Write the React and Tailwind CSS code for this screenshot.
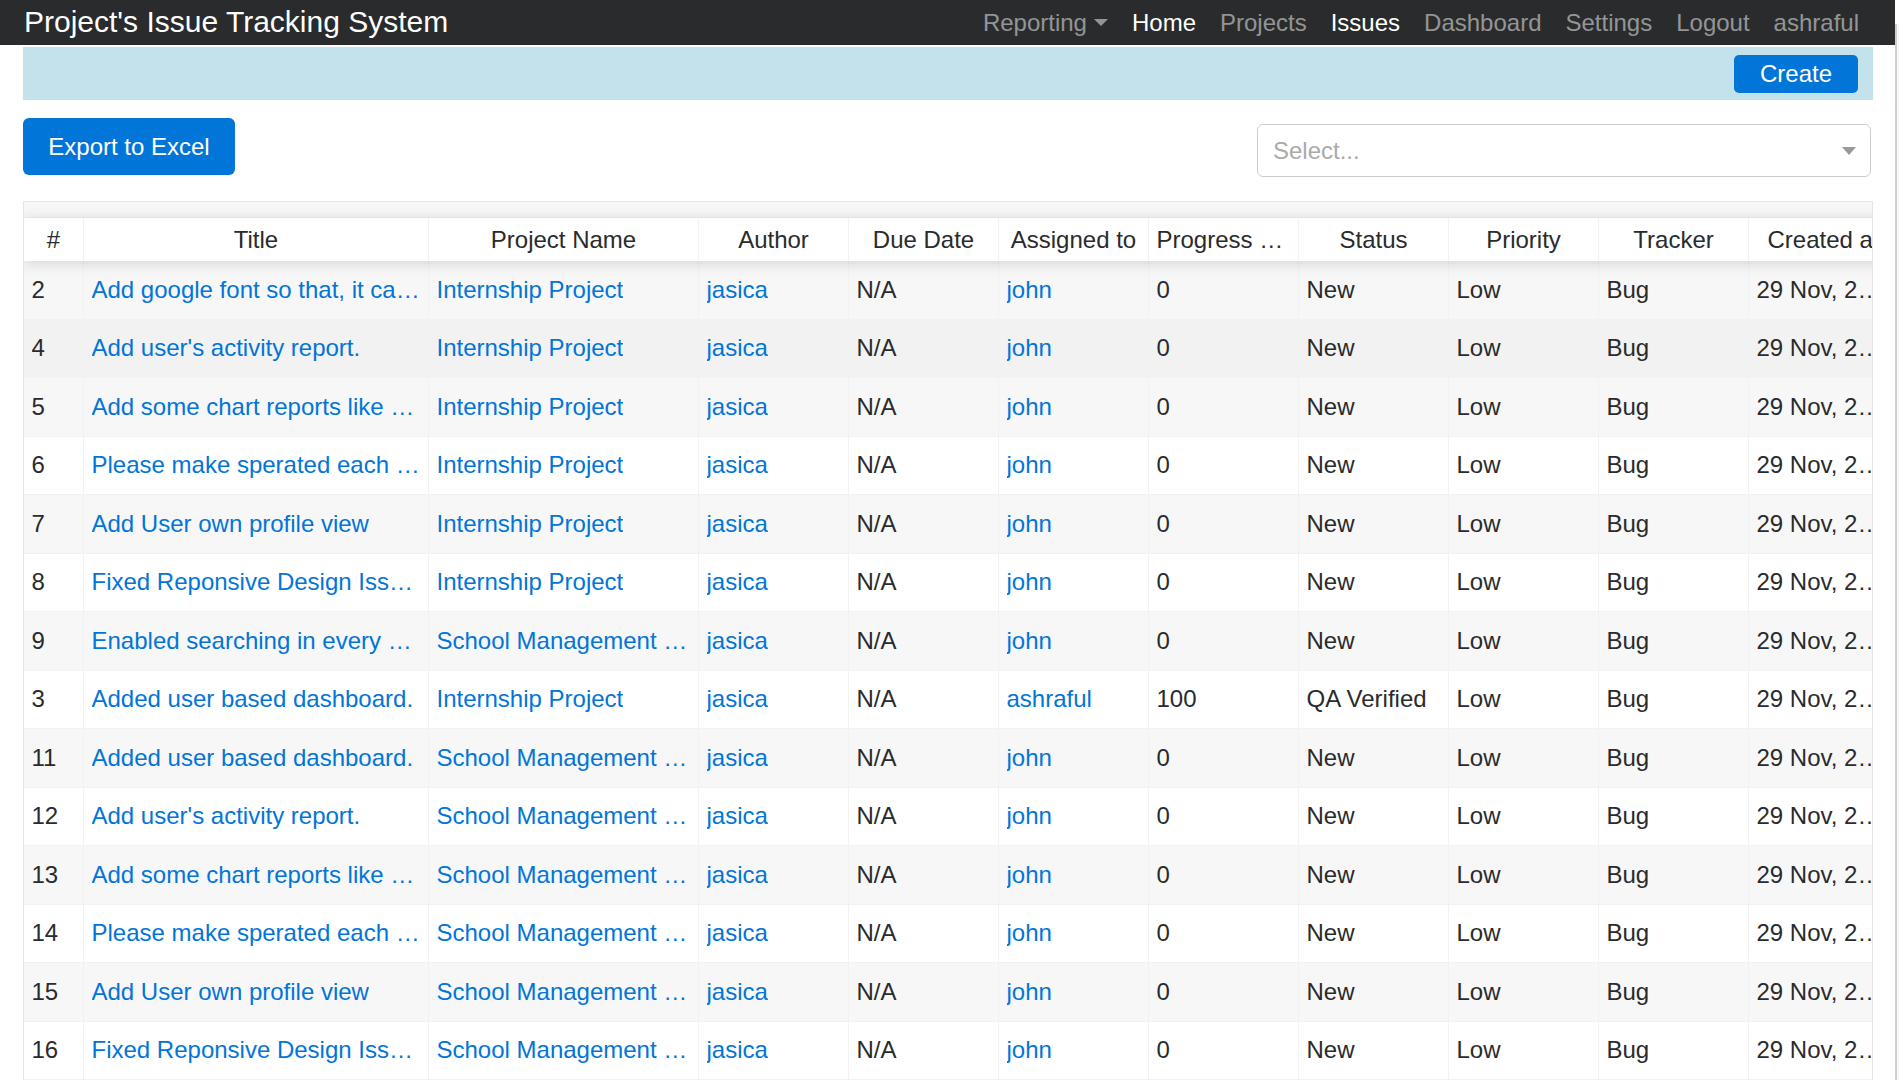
const font = "font-['Liberation_Sans',Arial,sans-serif]";

const columns = [
  { key: "id", label: "#", w: "w-[60px]" },
  { key: "title", label: "Title", w: "w-[345px]", link: true },
  { key: "project", label: "Project Name", w: "w-[270px]", link: true },
  { key: "author", label: "Author", w: "w-[150px]", link: true },
  { key: "due", label: "Due Date", w: "w-[150px]" },
  { key: "assigned", label: "Assigned to", w: "w-[150px]", link: true },
  { key: "progress", label: "Progress Percentage", w: "w-[150px]" },
  { key: "status", label: "Status", w: "w-[150px]" },
  { key: "priority", label: "Priority", w: "w-[150px]" },
  { key: "tracker", label: "Tracker", w: "w-[150px]" },
  { key: "created", label: "Created at", w: "w-[150px]" },
];

const INTERN = "Internship Project";
const SCHOOL = "School Management System";

const issues = [
  ["2", "Add google font so that, it can look nicer", INTERN],
  ["4", "Add user's activity report.", INTERN],
  ["5", "Add some chart reports like pie chart", INTERN],
  ["6", "Please make sperated each module", INTERN],
  ["7", "Add User own profile view", INTERN],
  ["8", "Fixed Reponsive Design Issues", INTERN],
  ["9", "Enabled searching in every module", SCHOOL],
  ["3", "Added user based dashboard.", INTERN, "ashraful", "100", "QA Verified"],
  ["11", "Added user based dashboard.", SCHOOL],
  ["12", "Add user's activity report.", SCHOOL],
  ["13", "Add some chart reports like pie chart", SCHOOL],
  ["14", "Please make sperated each module", SCHOOL],
  ["15", "Add User own profile view", SCHOOL],
  ["16", "Fixed Reponsive Design Issues", SCHOOL],
].map(([id, title, project, assigned = "john", progress = "0", status = "New"]) => ({
  id,
  title,
  project,
  author: "jasica",
  due: "N/A",
  assigned,
  progress,
  status,
  priority: "Low",
  tracker: "Bug",
  created: "29 Nov, 2017 10:30 AM",
}));

function Navbar() {
  const links = [
    { label: "Home", active: true },
    { label: "Projects" },
    { label: "Issues", active: true },
    { label: "Dashboard" },
    { label: "Settings" },
    { label: "Logout" },
    { label: "ashraful" },
  ];

  return (
    <nav className="h-[45px] bg-[#292b2c] flex items-center pl-[24px] pr-[24px]">
      <a href="#" className="text-white text-[30px] leading-none -mt-[2px]">
        Project's Issue Tracking System
      </a>
      <ul className="ml-auto flex items-center text-[24px] leading-none">
        <li className="px-[12px] text-white/50 flex items-center">
          Reporting
          <span className="inline-block w-0 h-0 ml-[7px] border-t-[7px] border-x-[7px] border-x-transparent border-t-current"></span>
        </li>
        {links.map((l) => (
          <li
            key={l.label}
            className={"px-[12px] " + (l.active ? "text-white" : "text-white/50")}
          >
            {l.label}
          </li>
        ))}
      </ul>
    </nav>
  );
}

function IssueTable() {
  return (
    <div className="mt-[24px] border border-[#e5e5e5] overflow-hidden">
      <div className="w-[2025px]">
        <div className="h-[16px] bg-[#f7f7f7] border-b border-[#f2f2f2]"></div>
        <div className="relative z-10 flex h-[43px] bg-white shadow-[0_2px_15px_0_rgba(0,0,0,0.15)]">
          {columns.map((c) => (
            <div
              key={c.key}
              className={c.w + " flex-none px-[7.5px] leading-[43px] text-center truncate border-r border-[#f2f2f2] text-[#292b2c]"}
            >
              {c.label}
            </div>
          ))}
        </div>
        {issues.map((row, i) => {
          let bg = "bg-white";
          if (i === 1) bg = "bg-[#f2f2f2]";
          else if (i % 2 === 0) bg = "bg-[#f7f7f7]";
          return (
            <div key={row.id} className={"flex h-[58.5px] border-b border-[#f2f2f2] " + bg}>
              {columns.map((c) => (
                <div
                  key={c.key}
                  className={c.w + " flex-none px-[7.5px] flex items-center border-r border-[#f2f2f2]"}
                >
                  <span className={"truncate " + (c.link ? "text-[#0275d8]" : "text-[#292b2c]")}>
                    {row[c.key]}
                  </span>
                </div>
              ))}
            </div>
          );
        })}
      </div>
    </div>
  );
}

export default function App() {
  return (
    <div className={font + " flex h-[1080px] overflow-hidden bg-white text-[24px]"}>
      <div className="w-[1895px] flex-none">
        <Navbar />
        <div className="pl-[23px] pr-[22px]">
          <div className="mt-[2px] h-[53px] bg-[#c4e2eb] flex items-center justify-end pr-[15px]">
            <button className="w-[124px] h-[38px] rounded-[5px] bg-[#0275d8] text-white text-[24px] leading-none">
              Create
            </button>
          </div>
          <div className="flex items-start pt-[18px]">
            <button className="h-[57px] w-[212px] rounded-[6px] bg-[#0275d8] text-white text-[24px] leading-none">
              Export to Excel
            </button>
            <div className="ml-auto mr-[2px] mt-[6px] w-[614px] h-[53px] border border-[#cccccc] rounded-[6px] flex items-center pl-[15px] pr-[14px]">
              <span className="text-[#aaaaaa]">Select...</span>
              <span className="ml-auto inline-block w-0 h-0 border-t-[8px] border-x-[7.5px] border-x-transparent border-t-[#999999]"></span>
            </div>
          </div>
          <IssueTable />
        </div>
      </div>
      <div className="flex-1 mt-[24px] border-l-2 border-[#d0d0d0] bg-[#f7f7f7]"></div>
    </div>
  );
}
